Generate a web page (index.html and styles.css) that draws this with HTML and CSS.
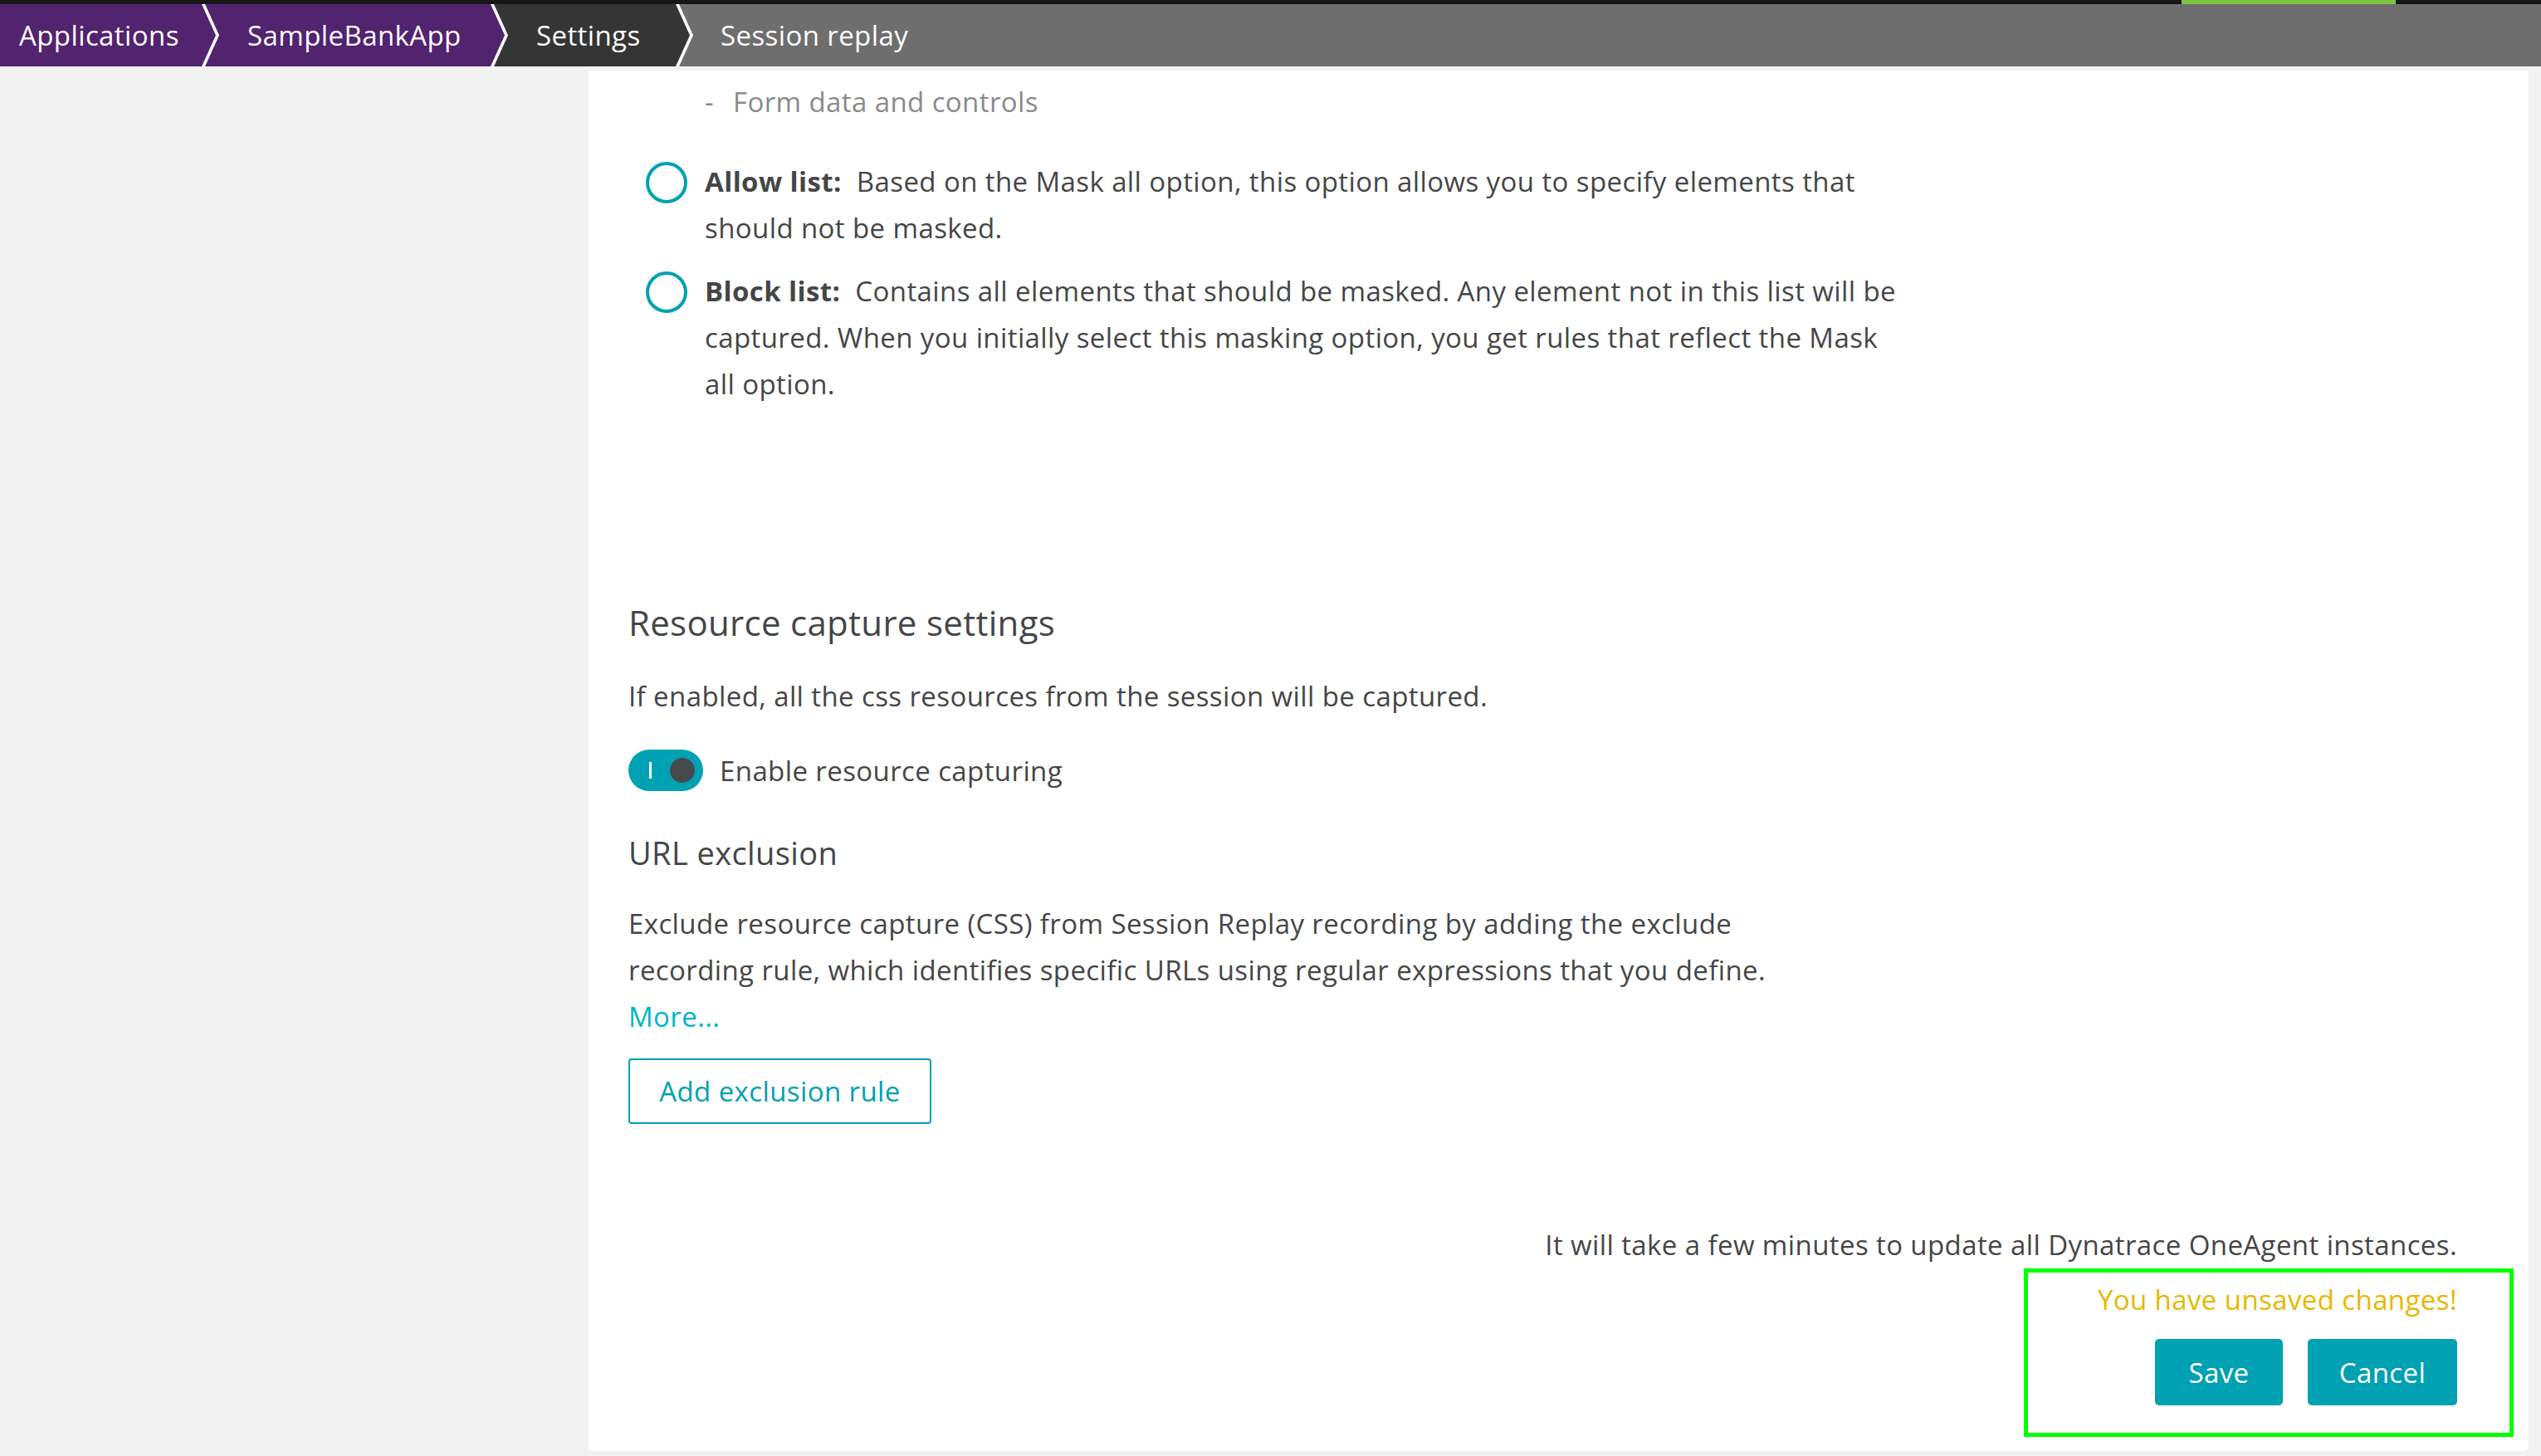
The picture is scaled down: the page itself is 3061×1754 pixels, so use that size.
FILE: index.html
```html
<!DOCTYPE html>
<html lang="en">
<head>
<meta charset="utf-8">
<title>Session replay</title>
<link rel="stylesheet" href="styles.css">
</head>
<body>
<div class="topstrip"><div class="topstrip-accent"></div></div>
<nav class="breadcrumb">
  <a class="crumb crumb-first crumb-purple">Applications</a>
  <a class="crumb crumb-app crumb-purple">SampleBankApp</a>
  <a class="crumb crumb-settings crumb-dark">Settings</a>
  <span class="crumb crumb-last crumb-gray">Session replay</span>
</nav>
<div class="layout">
  <aside class="sidebar"></aside>
  <main class="panel">
    <div class="masking">
      <p class="sublist"><span class="dash">-</span>Form data and controls</p>
      <div class="radio-item radio-first">
        <span class="radio"></span>
        <p class="radio-text"><b class="radio-label">Allow list:</b>Based on the Mask all option, this option allows you to specify elements that<br>should not be masked.</p>
      </div>
      <div class="radio-item">
        <span class="radio"></span>
        <p class="radio-text"><b class="radio-label">Block list:</b>Contains all elements that should be masked. Any element not in this list will be<br>captured. When you initially select this masking option, you get rules that reflect the Mask<br>all option.</p>
      </div>
    </div>
    <section class="resource">
      <h2 class="section-title">Resource capture settings</h2>
      <p class="text intro">If enabled, all the css resources from the session will be captured.</p>
      <div class="toggle-row">
        <span class="toggle"><span class="toggle-mark"></span><span class="toggle-knob"></span></span>
        <span class="toggle-label">Enable resource capturing</span>
      </div>
      <h3 class="subsection-title">URL exclusion</h3>
      <p class="text exclude">Exclude resource capture (CSS) from Session Replay recording by adding the exclude<br>recording rule, which identifies specific URLs using regular expressions that you define.<br><a class="more">More...</a></p>
      <button class="btn-outline">Add exclusion rule</button>
    </section>
    <footer class="panel-footer">
      <p class="notice">It will take a few minutes to update all Dynatrace OneAgent instances.</p>
      <div class="unsaved-box">
        <p class="unsaved">You have unsaved changes!</p>
        <div class="actions">
          <button class="btn-primary btn-save">Save</button>
          <button class="btn-primary btn-cancel">Cancel</button>
        </div>
      </div>
    </footer>
  </main>
</div>
</body>
</html>
```

FILE: styles.css
```css
* { box-sizing: border-box; }

html, body {
  margin: 0;
  padding: 0;
}

body {
  background: #f2f2f2;
  font-family: "Open Sans", "Liberation Sans", sans-serif;
  color: #454646;
  width: 3061px;
  height: 1754px;
  overflow: hidden;
  letter-spacing: 0.4px;
}

p { margin: 0; }

.topstrip {
  height: 5px;
  background: #161616;
  display: flex;
}

.topstrip-accent {
  margin-left: 2628px;
  width: 258px;
  height: 5px;
  background: #7dc540;
}

.breadcrumb {
  display: flex;
  height: 75px;
  background: #ffffff;
}

.crumb {
  display: flex;
  align-items: center;
  height: 75px;
  font-size: 33px;
  color: #ffffff;
  text-decoration: none;
  white-space: nowrap;
  clip-path: polygon(0 0, calc(100% - 17px) 0, 100% 50%, calc(100% - 17px) 100%, 0 100%, 17px 50%);
  margin-left: -13px;
  padding-left: 51px;
}

.crumb-purple { background: #52236f; }
.crumb-dark { background: #353535; }
.crumb-gray { background: #6e6e6e; }

.crumb-first {
  margin-left: 0;
  padding-left: 23px;
  width: 260px;
  clip-path: polygon(0 0, calc(100% - 17px) 0, 100% 50%, calc(100% - 17px) 100%, 0 100%);
}

.crumb-app { width: 361px; }
.crumb-settings { width: 236px; }

.crumb-last {
  flex: 1;
  padding-left: 50px;
  clip-path: polygon(0 0, 100% 0, 100% 100%, 0 100%, 17px 50%);
}

.layout {
  display: flex;
  height: 1674px;
}

.sidebar {
  width: 709px;
  flex: none;
}

.panel {
  flex: 1;
  margin: 5px 15px 6px 0;
  background: #ffffff;
  border-bottom-right-radius: 6px;
  padding: 10px 0 0 48px;
  display: flex;
  flex-direction: column;
}

.masking {
  font-size: 33px;
  line-height: 56px;
}

.sublist {
  padding-left: 92px;
  color: #8a8a8a;
}

.dash {
  margin-right: 23px;
}

.radio-item {
  display: flex;
  align-items: flex-start;
  padding-left: 21px;
  margin-top: 20px;
}

.radio-first { margin-top: 40px; }

.radio {
  flex: none;
  width: 50px;
  height: 50px;
  border: 4px solid #00a1b2;
  border-radius: 50%;
  margin-top: 4px;
  margin-right: 21px;
}

.radio-text {
  white-space: nowrap;
}

.radio-label {
  font-weight: 700;
  margin-right: 18px;
}

.resource {
  margin-top: 229px;
}

.section-title {
  margin: 0;
  font-size: 42px;
  line-height: 60px;
  font-weight: 400;
  letter-spacing: 0.3px;
}

.text {
  font-size: 33px;
  line-height: 56px;
  white-space: nowrap;
}

.intro { margin-top: 31px; }

.toggle-row {
  display: flex;
  align-items: center;
  height: 56px;
  margin-top: 33px;
  font-size: 33px;
}

.toggle {
  flex: none;
  display: flex;
  align-items: center;
  width: 90px;
  height: 50px;
  border-radius: 25px;
  background: #00a1b2;
  padding-left: 25px;
  margin-right: 20px;
}

.toggle-mark {
  width: 3px;
  height: 20px;
  background: #ffffff;
}

.toggle-knob {
  width: 30px;
  height: 30px;
  border-radius: 50%;
  background: #464a4a;
  margin-left: 22px;
}

.subsection-title {
  margin: 46px 0 0;
  font-size: 38px;
  line-height: 50px;
  font-weight: 400;
}

.exclude { margin-top: 33px; }

.more {
  color: #00b3c7;
  text-decoration: none;
}

.btn-outline {
  display: block;
  margin-top: 22px;
  width: 365px;
  height: 79px;
  border: 2px solid #00a1b2;
  border-radius: 4px;
  background: #ffffff;
  color: #00a1b2;
  font-family: inherit;
  font-size: 33px;
  letter-spacing: 0.4px;
  padding: 0;
}

.panel-footer {
  margin-top: 118px;
  display: flex;
  flex-direction: column;
  align-items: flex-end;
}

.notice {
  font-size: 33px;
  line-height: 56px;
  margin-right: 86px;
  white-space: nowrap;
}

.unsaved-box {
  width: 590px;
  height: 203px;
  margin-right: 18px;
  border: 5px solid #00ff00;
  padding: 5px 63px 0 0;
  display: flex;
  flex-direction: column;
  align-items: flex-end;
}

.unsaved {
  font-size: 33px;
  line-height: 56px;
  color: #e6b800;
  white-space: nowrap;
}

.actions {
  display: flex;
  gap: 30px;
  margin-top: 19px;
}

.btn-primary {
  height: 80px;
  border: none;
  border-radius: 5px;
  background: #00a1b2;
  color: #ffffff;
  font-family: inherit;
  font-size: 33px;
  letter-spacing: 0.4px;
  padding: 0;
}

.btn-save { width: 154px; }
.btn-cancel { width: 180px; }
```
